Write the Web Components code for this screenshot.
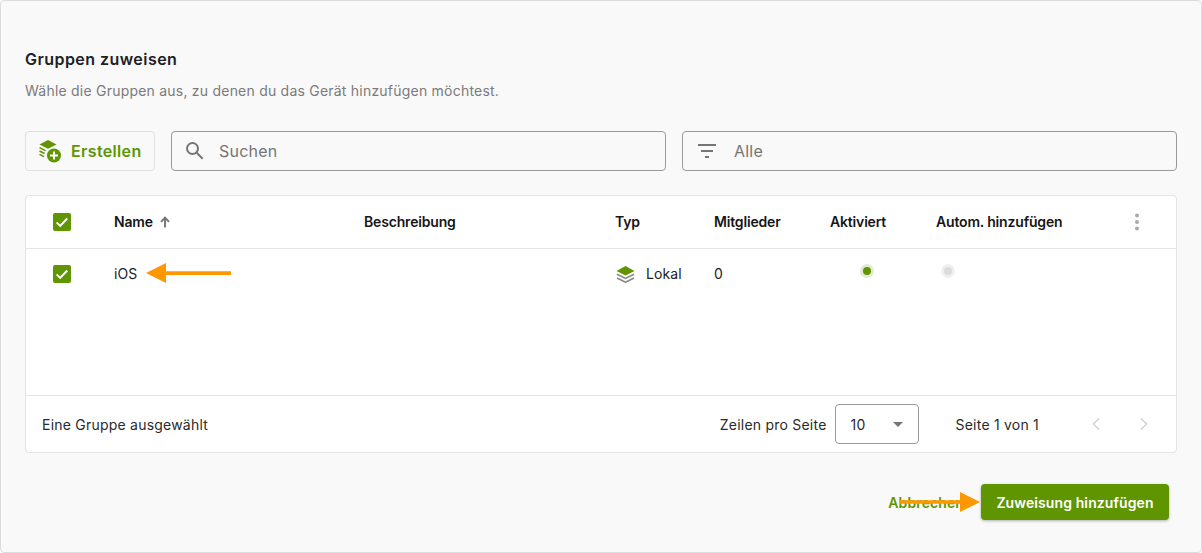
<!DOCTYPE html>
<html lang="de">
<head>
<meta charset="utf-8">
<title>Gruppen zuweisen</title>
<style>
  html, body { margin: 0; padding: 0; height: 100%; }
  body { font-family: Inter, "Liberation Sans", sans-serif; background: #fff; }
</style>
</head>
<body>
<assign-dialog></assign-dialog>

<script>
const GREEN = "#5f9500";

class CheckBox extends HTMLElement {
  constructor() {
    super();
    this.attachShadow({ mode: "open" });
    this.shadowRoot.innerHTML = `
    <style>
      :host { display: block; width: 18px; height: 18px; background: ${GREEN}; border-radius: 2px; }
      svg { display: block; }
    </style>
    <svg width="18" height="18" viewBox="0 0 18 18"><path d="M3.6 9.4l3.6 3.5 7-7.4" fill="none" stroke="#fff" stroke-width="2"/></svg>`;
  }
}
customElements.define("check-box", CheckBox);

class StatusDot extends HTMLElement {
  constructor() {
    super();
    this.attachShadow({ mode: "open" });
    const on = this.hasAttribute("on");
    this.shadowRoot.innerHTML = `
    <style>
      :host { display: block; width: 14px; height: 14px; border-radius: 50%; background: ${on ? "#e2ebd2" : "#f0f0f0"};
        display: flex; align-items: center; justify-content: center; }
      i { display: block; width: 8px; height: 8px; border-radius: 50%; background: ${on ? GREEN : "#dcdcdc"}; }
    </style>
    <i></i>`;
  }
}
customElements.define("status-dot", StatusDot);

class SearchField extends HTMLElement {
  constructor() {
    super();
    this.attachShadow({ mode: "open" });
    this.shadowRoot.innerHTML = `
    <style>
      :host { display: flex; align-items: center; flex: 1 1 0; height: 38px; border: 1px solid #9a9a9a; border-radius: 4px;
        font-size: 16px; letter-spacing: .2px; color: #757575; }
      ::slotted(svg) { flex: none; }
      .label { white-space: nowrap; }
    </style>
    <slot name="icon"></slot><span class="label"><slot></slot></span>`;
  }
}
customElements.define("search-field", SearchField);

class GroupTable extends HTMLElement {
  constructor() {
    super();
    this.attachShadow({ mode: "open" });
    this.shadowRoot.innerHTML = `
    <style>
      :host { display: flex; flex-direction: column; height: 256px; margin-top: 24px; background: #fff; border: 1px solid #e4e4e4; border-radius: 4px;
        font-size: 14px; color: #212121; letter-spacing: .1px; }
      .row { display: grid; grid-template-columns: 27px 61px 250px 251px 99px 116px 106px 191px 1fr; }
      .head { height: 52px; align-items: center; border-bottom: 1px solid #e4e4e4; font-weight: 600; font-size: 14px; color: #161616; letter-spacing: -.17px; }
      .head > span { margin-top: -1px; }
      .head > .more { margin-top: 0; }
      .body { flex: 1; border-bottom: 1px solid #e4e4e4; padding-top: 16px; align-items: start; }
      .body > span { line-height: 18px; }
      .sort { display: inline-flex; align-items: center; gap: 7px; }
      .typ { display: flex; align-items: center; gap: 11px; margin-left: 1px; }
      .body .dot { margin-top: -1px; margin-left: 30px; }
      .body .dot2 { margin-top: -1px; margin-left: 5px; }
      .more { display: flex; justify-content: flex-start; margin-left: 7px; }
      .foot { display: flex; align-items: center; height: 56px; padding: 0 16px 0 16px; font-size: 14px; color: #2a2a2a; letter-spacing: .22px; }
      .foot .sel { flex: 1; }
      .select { display: flex; align-items: center; justify-content: space-between; box-sizing: border-box; width: 84px; height: 40px; margin: 0 37px 0 8px; padding: 0 15px; border: 1px solid #9a9a9a; border-radius: 4px; }
      .tri { width: 0; height: 0; border: 5px solid transparent; border-top: 5px solid #757575; border-bottom: 0; }
      .pager { display: flex; gap: 38px; margin-left: 52px; margin-right: 11px; }
      svg { display: block; }
    </style>
    <div class="row head">
      <span></span><check-box></check-box>
      <span class="sort">Name
        <svg width="10" height="12" viewBox="0 0 10 12"><path d="M5 11.5V2M1 5.8L5 1.6l4 4.2" fill="none" stroke="#757575" stroke-width="1.9"/></svg>
      </span>
      <span>Beschreibung</span><span>Typ</span><span>Mitglieder</span><span>Aktiviert</span><span>Autom. hinzufügen</span>
      <span class="more"><svg width="6" height="18" viewBox="0 0 6 18" fill="#aaa"><circle cx="3" cy="2.5" r="2"/><circle cx="3" cy="9" r="2"/><circle cx="3" cy="15.5" r="2"/></svg></span>
    </div>
    <div class="row body">
      <span></span><check-box></check-box>
      <span>iOS</span><span></span>
      <span class="typ">
        <svg width="19" height="18" viewBox="0 0 19 18"><path d="M9.5 1L18.5 6 9.5 10.5.5 6z" fill="${GREEN}"/><path d="M1 9.2l8.5 4.2L18 9.2M1 13l8.5 4.2L18 13" fill="none" stroke="#8a8a8a" stroke-width="1.7"/></svg>
        Lokal
      </span>
      <span>0</span>
      <status-dot class="dot" on></status-dot>
      <status-dot class="dot2"></status-dot>
      <span></span>
    </div>
    <div class="foot">
      <span class="sel">Eine Gruppe ausgewählt</span>
      <span>Zeilen pro Seite</span>
      <div class="select"><span>10</span><i class="tri"></i></div>
      <span>Seite 1 von 1</span>
      <div class="pager">
        <svg width="10" height="14" viewBox="0 0 10 14"><path d="M8 1.5L2.5 7 8 12.5" fill="none" stroke="#d4d4d4" stroke-width="1.6"/></svg>
        <svg width="10" height="14" viewBox="0 0 10 14"><path d="M2 1.5L7.5 7 2 12.5" fill="none" stroke="#d4d4d4" stroke-width="1.6"/></svg>
      </div>
    </div>`;
  }
}
customElements.define("group-table", GroupTable);

class AssignDialog extends HTMLElement {
  constructor() {
    super();
    this.attachShadow({ mode: "open" });
    this.shadowRoot.innerHTML = `
    <style>
      :host { display: block; position: relative; box-sizing: border-box; width: 1202px; height: 553px; padding: 49px 24px 0 24px;
        background: #f9f9f9; border: 1px solid #dcdcdc; border-radius: 4px; font-family: Inter, "Liberation Sans", sans-serif; }
      h2 { margin: 0; font-size: 16px; line-height: 19px; font-weight: 600; color: #212121; letter-spacing: .45px; }
      p { margin: 13px 0 0; font-size: 14px; line-height: 17px; color: #7b7b7b; letter-spacing: .22px; }
      .tools { display: flex; gap: 16px; margin-top: 32px; }
      .create { display: flex; align-items: center; gap: 9px; box-sizing: border-box; width: 130px; height: 40px; padding-left: 12px; border: 1px solid #e0e0e0; border-radius: 4px;
        color: ${GREEN}; font-size: 16px; font-weight: 600; letter-spacing: .35px; }
      .actions { display: flex; justify-content: flex-end; align-items: center; margin: 31px 8px 0 0; font-size: 14px; font-weight: 600; letter-spacing: .1px; }
      .cancel { color: ${GREEN}; margin-right: 17px; white-space: nowrap; }
      .assign { display: flex; align-items: center; justify-content: center; width: 188px; height: 36px; background: ${GREEN}; color: #fff; border-radius: 4px; box-shadow: 0 1px 3px rgba(0,0,0,.3); }
      .arrow { position: absolute; display: block; }
      svg { display: block; }
    </style>
    <h2>Gruppen zuweisen</h2>
    <p>Wähle die Gruppen aus, zu denen du das Gerät hinzufügen möchtest.</p>
    <div class="tools">
      <div class="create">
        <svg width="24" height="24" viewBox="0 0 23 24">
          <path d="M9.5 1L18 5.4 9.5 9.8 1 5.4z" fill="${GREEN}"/>
          <path d="M1 8.6l6 3M1 12l5 2.5M1 15.4l4.5 2.2" fill="none" stroke="${GREEN}" stroke-width="1.6"/>
          <circle cx="15.5" cy="16.5" r="7" fill="${GREEN}"/>
          <path d="M15.5 12.5v8M11.5 16.5h8" stroke="#fff" stroke-width="2"/>
        </svg>
        Erstellen
      </div>
      <search-field>
        <svg slot="icon" style="margin:0 12px 0 11px" width="24" height="24" viewBox="0 0 24 24"><circle cx="9.5" cy="9.5" r="5.5" fill="none" stroke="#757575" stroke-width="2"/><path d="M13.7 13.7l6 6" stroke="#757575" stroke-width="2"/></svg>
        Suchen
      </search-field>
      <search-field>
        <svg slot="icon" style="margin:0 15px 0 12px" width="24" height="24" viewBox="0 0 24 24"><path d="M3 6h18M6 12h12M10 18h4" stroke="#757575" stroke-width="2" fill="none"/></svg>
        Alle
      </search-field>
    </div>
    <group-table></group-table>
    <div class="actions">
      <span class="cancel">Abbrechen</span>
      <div class="assign">Zuweisung hinzufügen</div>
    </div>
    <svg class="arrow" style="left:145px;top:262px" width="86" height="20" viewBox="0 0 86 20"><path d="M0 10L20 0v8.2h65v3.8H20V20z" fill="#ff9800"/></svg>
    <svg class="arrow" style="left:899px;top:491px" width="80" height="20" viewBox="0 0 80 20"><path d="M80 10L60 0v8.2H0v3.6h60V20z" fill="#ff9800"/></svg>`;
  }
}
customElements.define("assign-dialog", AssignDialog);
</script>
</body>
</html>
